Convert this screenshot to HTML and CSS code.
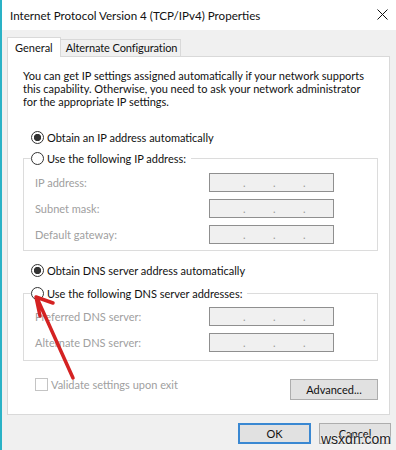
FILE: index.html
```html
<!DOCTYPE html>
<html>
<head>
<meta charset="utf-8">
<link rel="stylesheet" href="styles.css">
</head>
<body>
<div class="window">
  <div class="titlebar">
    <span class="title">Internet Protocol Version 4 (TCP/IPv4) Properties</span>
    <svg class="close" width="11" height="11" viewBox="0 0 11 11"><path d="M0.5 0.5L10.5 10.5M10.5 0.5L0.5 10.5" stroke="#111" stroke-width="1" fill="none"/></svg>
  </div>
  <div class="content">
    <div class="tabs">
      <div class="tab active">General</div>
      <div class="tab">Alternate Configuration</div>
    </div>
    <div class="panel">
      <p class="intro">You can get IP settings assigned automatically if your network supports<br>this capability. Otherwise, you need to ask your network administrator<br>for the appropriate IP settings.</p>
      <label class="radio-row first"><input type="radio" name="ip" checked><span>Obtain an IP address automatically</span></label>
      <fieldset class="group ip">
        <legend><label class="radio-row"><input type="radio" name="ip"><span>Use the following IP address:</span></label></legend>
        <div class="field"><span class="flabel">IP address:</span><div class="ipbox"><i>.</i><i>.</i><i>.</i></div></div>
        <div class="field"><span class="flabel">Subnet mask:</span><div class="ipbox"><i>.</i><i>.</i><i>.</i></div></div>
        <div class="field"><span class="flabel">Default gateway:</span><div class="ipbox"><i>.</i><i>.</i><i>.</i></div></div>
      </fieldset>
      <label class="radio-row dns-auto"><input type="radio" name="dns" checked><span>Obtain DNS server address automatically</span></label>
      <fieldset class="group dns">
        <legend><label class="radio-row"><input type="radio" name="dns"><span>Use the following DNS server addresses:</span></label></legend>
        <div class="field"><span class="flabel">Preferred DNS server:</span><div class="ipbox"><i>.</i><i>.</i><i>.</i></div></div>
        <div class="field"><span class="flabel">Alternate DNS server:</span><div class="ipbox"><i>.</i><i>.</i><i>.</i></div></div>
      </fieldset>
      <div class="options">
        <label class="check"><span class="box"></span><span>Validate settings upon exit</span></label>
        <button class="btn advanced">Advanced...</button>
      </div>
    </div>
    <div class="footer">
      <button class="btn ok">OK</button>
      <button class="btn cancel">Cancel</button>
    </div>
  </div>
</div>
<svg class="arrow" width="396" height="450" viewBox="0 0 396 450">
  <path d="M73 378L37 298M53 303L36 297L40 316" stroke="#d42222" stroke-width="3.5" stroke-linecap="round" stroke-linejoin="round" fill="none"/>
</svg>
<span class="watermark">wsxdn.com</span>
</body>
</html>
```
FILE: styles.css
```css
* { box-sizing: border-box; }
body {
  margin: 0;
  width: 396px;
  height: 450px;
  overflow: hidden;
  position: relative;
  background: #f0f0f0;
  font-family: Lato, "Liberation Sans", sans-serif;
  font-size: 11px;
  color: #111;
}
.window {
  height: 450px;
  border-left: 2px solid #2ab2c6;
  display: flex;
  flex-direction: column;
}
.titlebar {
  height: 30px;
  background: #fff;
  display: flex;
  align-items: center;
  justify-content: space-between;
  padding: 0 8px 0 8px;
}
.title { font-size: 11.6px; white-space: nowrap; }
.close { display: block; margin-top: -2px; }
.content {
  flex: 1;
  padding: 7px 6px 0 5px;
  display: flex;
  flex-direction: column;
}
.tabs { display: flex; align-items: flex-end; }
.tab {
  border: 1px solid #d9d9d9;
  border-bottom: none;
  height: 17px;
  line-height: 16px;
  padding: 0 3px 0 5px;
  background: #f0f0f0;
  margin-left: -1px;
  white-space: nowrap;
  letter-spacing: -0.1px;
}
.tab.active {
  background: #fff;
  height: 20px;
  line-height: 19px;
  padding: 0 7px;
  margin-left: 0;
  margin-bottom: -1px;
  position: relative;
  z-index: 1;
  letter-spacing: 0;
}
.panel {
  background: #fff;
  border: 1px solid #d9d9d9;
  padding: 12px 11px 14px 15px;
  display: flex;
  flex-direction: column;
}
.intro { margin: 0; line-height: 13px; white-space: nowrap; }
.radio-row {
  display: flex;
  align-items: center;
  height: 16px;
  padding-left: 8px;
  white-space: nowrap;
}
.radio-row.first { margin-top: 21px; }
.radio-row.dns-auto { margin-top: 11px; }
.radio-row input {
  appearance: none;
  -webkit-appearance: none;
  width: 13px;
  height: 13px;
  margin: 0 3px 0 0;
  border: 1px solid #333;
  border-radius: 50%;
  background: #fff;
  flex: none;
}
.radio-row input:checked {
  background: radial-gradient(circle, #333 0 3.4px, #fff 3.9px);
}
.group {
  margin: 5px 0 0 0;
  border: 1px solid #dcdcdc;
  padding: 7px 11px 6px 11px;
  min-width: 0;
}
.group.dns { margin-top: 7px; padding-top: 6px; padding-bottom: 8px; }
.group legend { padding: 0 5px 0 0; margin-left: -4px; }
.group legend .radio-row { padding-left: 0; }
.field { display: flex; align-items: center; height: 19px; }
.field + .field { margin-top: 7px; }
.flabel { width: 174px; color: #a0a0a0; white-space: nowrap; }
.ipbox {
  width: 125px;
  height: 19px;
  border: 1px solid #8f8f8f;
  background: #f0f0f0;
  display: flex;
  gap: 27px;
  padding-left: 33px;
  line-height: 17px;
  color: #9a9a9a;
}
.ipbox i { font-style: normal; width: 3px; }
.options {
  margin-top: 17px;
  display: flex;
  justify-content: space-between;
  align-items: flex-start;
  padding-left: 12px;
}
.check { display: flex; align-items: center; color: #a0a0a0; line-height: 13px; white-space: nowrap; }
.check .box {
  width: 13px;
  height: 13px;
  border: 1px solid #c4c4c4;
  background: #fff;
  margin-right: 3px;
}
.btn {
  font: inherit;
  color: #111;
  height: 21px;
  padding: 0;
  background: #e1e1e1;
  border: 1px solid #adadad;
}
.advanced { width: 88px; margin-top: 1px; }
.footer {
  margin-top: 8px;
  display: flex;
  justify-content: flex-end;
  gap: 8px;
  margin-right: -1px;
}
.ok { width: 73px; border: 2px solid #3a88d2; }
.cancel { width: 72px; }
.arrow { position: absolute; left: 0; top: 0; pointer-events: none; }
.watermark {
  position: absolute;
  left: 321px;
  top: 431px;
  font-family: "Liberation Sans", sans-serif;
  font-size: 14px;
  color: #222;
  text-shadow: 0 0 2px #fff, 0 0 2px #fff;
}
```
